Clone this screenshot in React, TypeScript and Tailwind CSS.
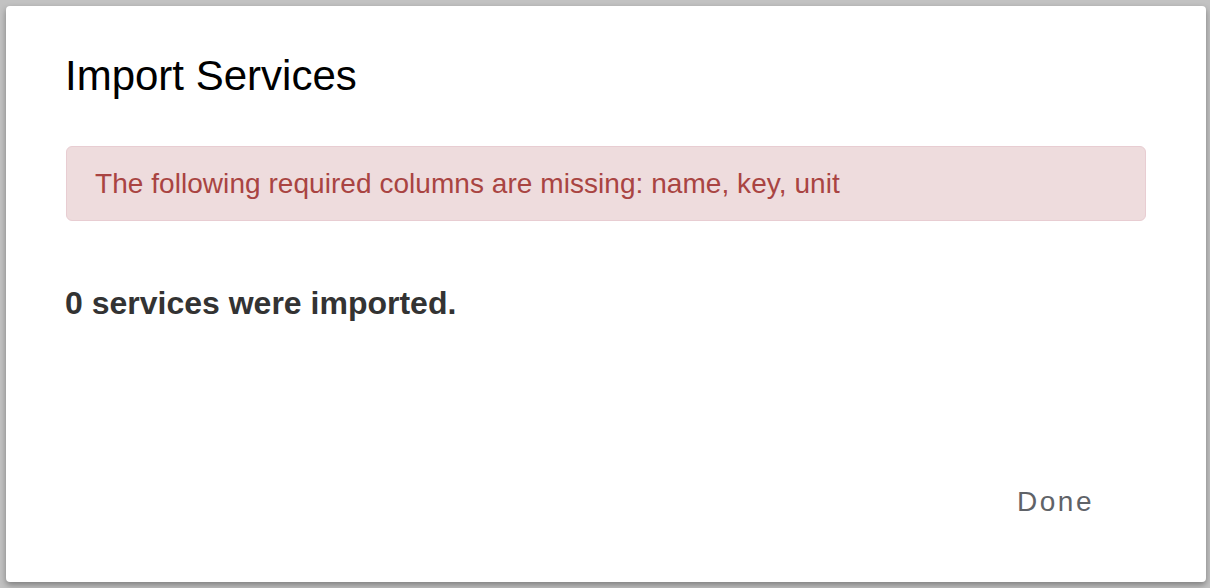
export default function App() {
  return (
    <div className="h-[588px] w-[1210px] overflow-hidden bg-[#c2c2c2] pl-[6px] pt-[6px]">
      <div
        role="dialog"
        aria-label="Import Services"
        className="flex h-[576px] w-[1200px] flex-col rounded-[4px] bg-white shadow-[0_3px_6px_rgba(0,0,0,0.35)]"
        style={{ fontFamily: '"Liberation Sans", Arial, sans-serif' }}
      >
        {/* Header */}
        <h2 className="ml-[59px] mt-[49px] text-[42px] leading-[42px] font-normal text-black">
          Import Services
        </h2>

        {/* Error alert */}
        <div className="mx-[60px] mt-[49px] flex h-[75px] items-center rounded-[6px] border border-[#e8cdd2] bg-[#eedcdd] px-[28px]">
          <p className="text-[28px] leading-[28px] tracking-[0.05px] text-[#a94442]">
            The following required columns are missing: name, key, unit
          </p>
        </div>

        {/* Result */}
        <p className="ml-[59px] mt-[66px] text-[32px] leading-[32px] font-bold text-[#333333]">
          0 services were imported.
        </p>

        {/* Footer */}
        <div className="mt-auto mb-[66px] flex justify-end pr-[112px]">
          <button className="text-[28px] leading-[28px] tracking-[2.5px] text-[#5f6368]">
            Done
          </button>
        </div>
      </div>
    </div>
  );
}
